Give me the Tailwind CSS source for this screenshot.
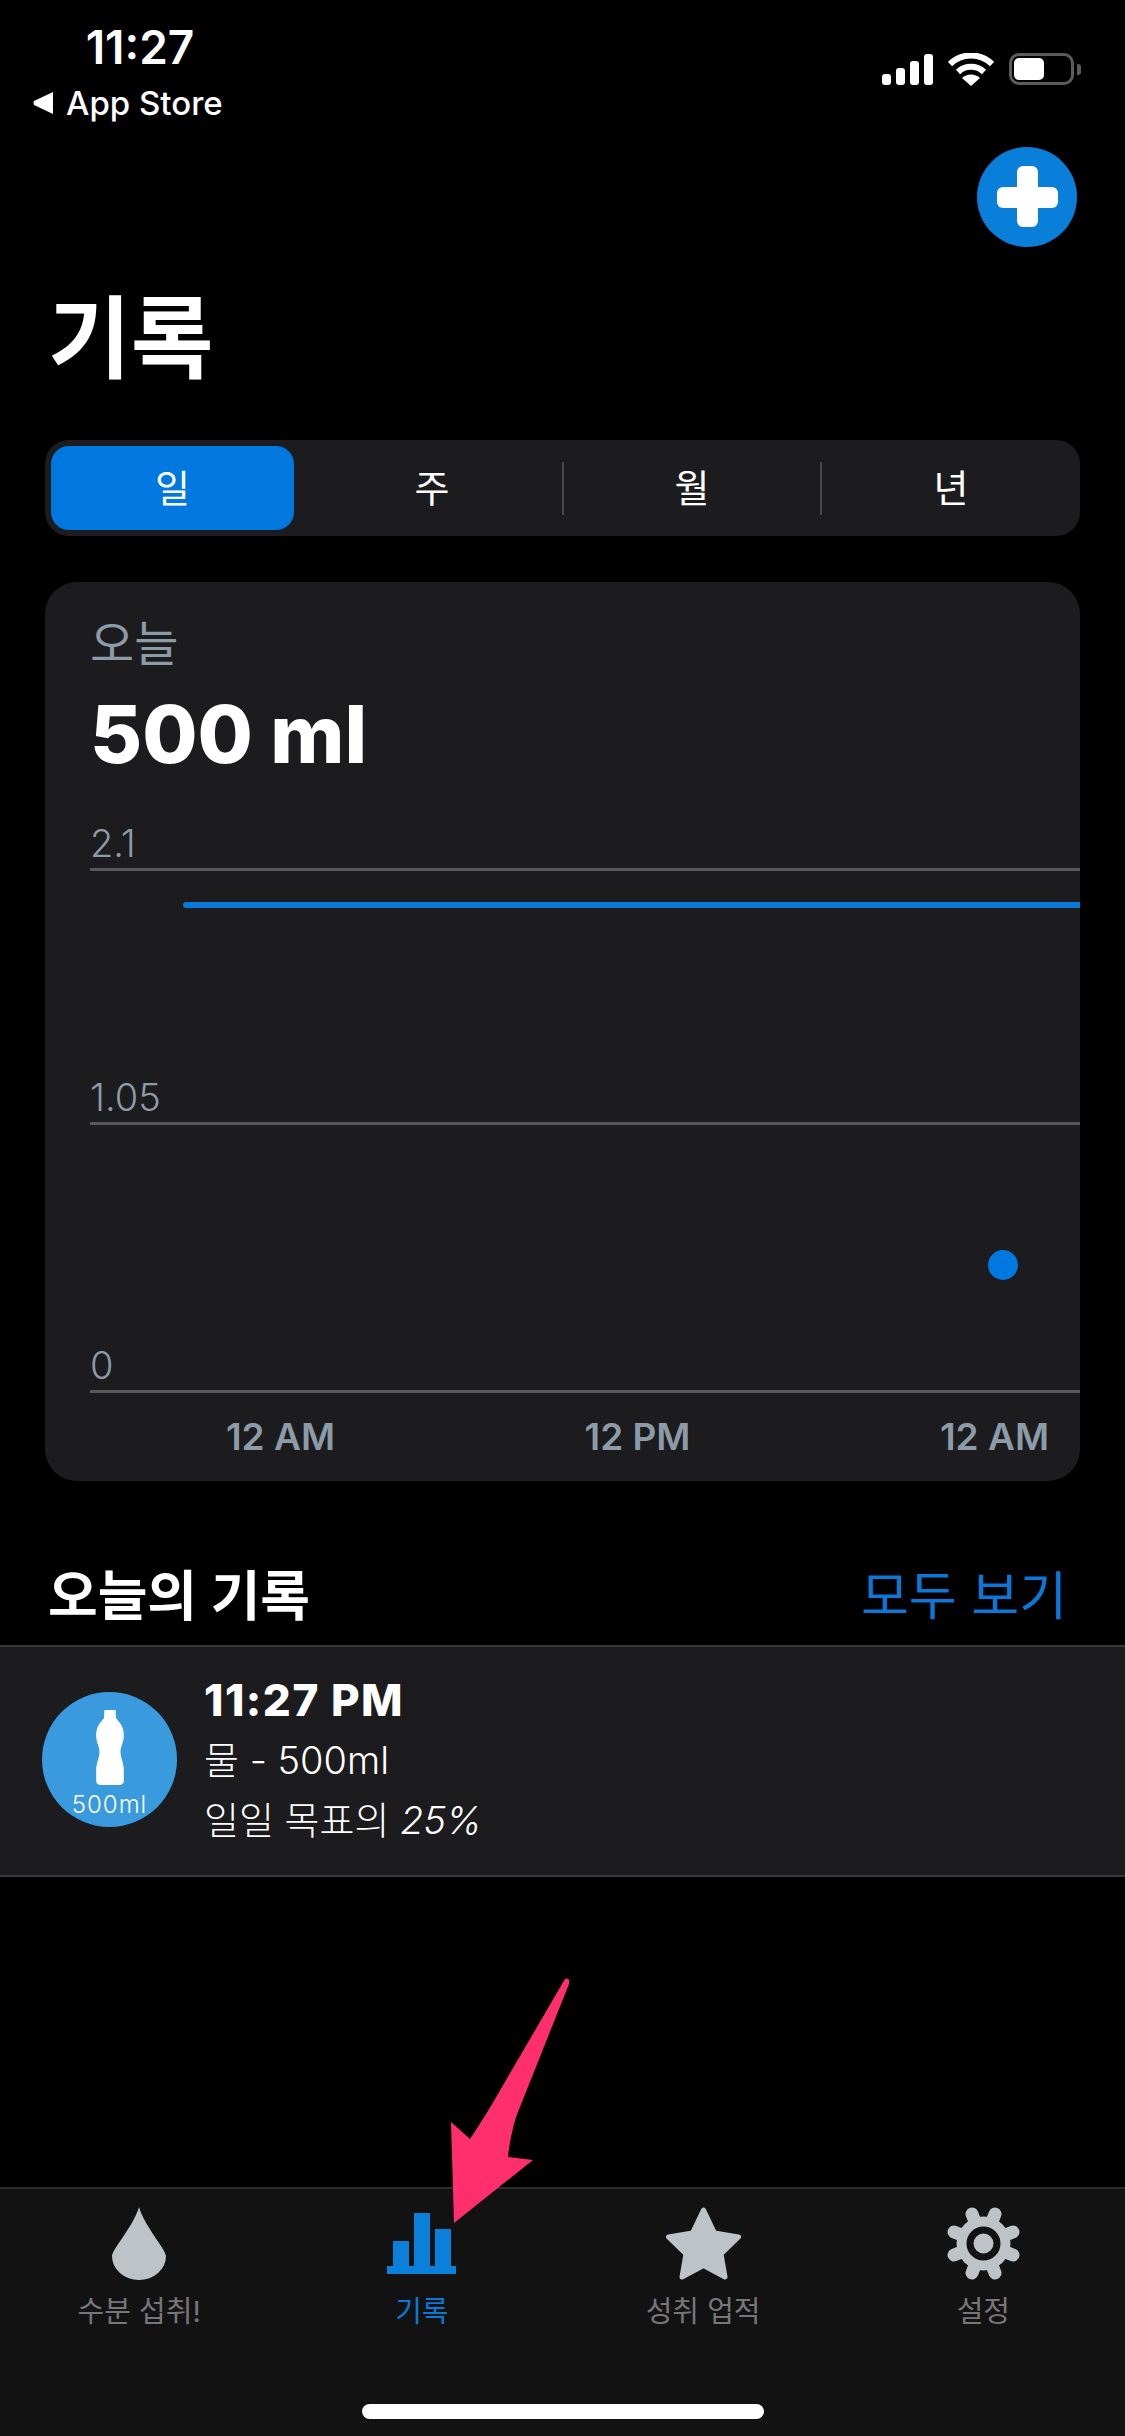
<!DOCTYPE html>
<html lang="ko">
<head>
  <meta charset="UTF-8" />
  <meta name="viewport" content="width=device-width, initial-scale=1.0"/>
  <title>기록</title>
  <script src="https://cdn.jsdelivr.net/npm/@tailwindcss/browser@4"></script>
</head>
<body class="bg-black">
  <div class="relative w-[1125px] h-[2436px] overflow-hidden bg-black text-white flex flex-col font-['Inter','Noto_Sans_CJK_KR',sans-serif]">

    <!-- Status bar -->
    <div class="flex justify-between h-[147px] pl-[33px] pr-[44px]">
      <div>
        <div class="w-[214px] pt-[20px] h-[76px] text-center text-[46px] leading-[54px] font-semibold">11:27</div>
        <div class="flex items-center gap-[13px] h-[50px] mt-[2px] text-[33px] leading-[50px] font-medium">
          <svg class="w-[20px] h-[22px]" viewBox="0 0 20 22"><path d="M20 0v22L1 13q-1-2 0-4z" fill="#fff"/></svg>
          <span>App Store</span>
        </div>
      </div>
      <div class="flex items-start gap-[15px] pt-[53px]">
        <div class="flex items-end gap-[5px] h-[32px]">
          <div class="w-[9px] h-[11px] bg-white rounded-[3px]"></div>
          <div class="w-[9px] h-[17px] bg-white rounded-[3px]"></div>
          <div class="w-[9px] h-[24px] bg-white rounded-[3px]"></div>
          <div class="w-[9px] h-[31px] bg-white rounded-[3px]"></div>
        </div>
        <svg class="w-[46px] h-[33px]" viewBox="0 0 46 33"><path d="M2 11a30 30 0 0 1 42 0M10 19a19 19 0 0 1 26 0" fill="none" stroke="#fff" stroke-width="6"/><path d="M23 33l-9-8a13 13 0 0 1 18 0z" fill="#fff"/></svg>
        <div class="flex items-center">
          <div class="w-[65px] h-[32px] rounded-[10px] border-[3px] border-[#5c5c5e] p-[2px]">
            <div class="w-[30px] h-full bg-white rounded-[5px]"></div>
          </div>
          <div class="w-[4px] h-[11px] ml-[3px] bg-[#5c5c5e] rounded-r-[3px]"></div>
        </div>
      </div>
    </div>

    <!-- Add button -->
    <div class="flex justify-end pr-[48px]">
      <div class="w-[100px] h-[100px] rounded-full bg-[#0a7fd9] relative">
        <div class="absolute left-[20px] top-[40px] w-[61px] h-[21px] bg-white rounded-[6px]"></div>
        <div class="absolute left-[40px] top-[19px] w-[21px] h-[61px] bg-white rounded-[6px]"></div>
      </div>
    </div>

    <h1 class="mt-[37px] pl-[48px] h-[110px] text-[90px] leading-[110px] font-bold">기록</h1>

    <!-- Range picker -->
    <div class="mt-[46px] mx-[45px] h-[96px] rounded-[24px] bg-[#1c1c1e] flex items-center pl-[6px] text-[38px]">
      <div class="w-[243px] h-[84px] rounded-[18px] bg-[#0078e0] flex items-center justify-center">일</div>
      <div class="w-[260px] ml-[8px] h-[53px] flex items-center justify-center">주</div>
      <div class="w-[258px] h-[53px] border-l-2 border-[#48484a] flex items-center justify-center">월</div>
      <div class="flex-1 h-[53px] border-l-2 border-[#48484a] flex items-center justify-center">년</div>
    </div>

    <!-- Chart card -->
    <div class="mt-[46px] mx-[45px] h-[899px] rounded-[32px] bg-[#1c1c1e] pl-[45px] overflow-hidden">
      <div class="pt-[30px] h-[96px] text-[48px] leading-[64px] text-[#8b9ba8]">오늘</div>
      <div class="pt-[2px] h-[110px] text-[80px] leading-[108px] font-extrabold">500 ml</div>
      <div class="relative text-[38px] leading-[44px] font-light text-[#8b9ba8]">
        <div class="h-[83px] flex flex-col justify-end">
          <div>2.1</div>
          <div class="h-[3px] mt-[3px] bg-[#58585a]"></div>
        </div>
        <div class="h-[254px] flex flex-col justify-end">
          <div>1.05</div>
          <div class="h-[3px] mt-[3px] bg-[#58585a]"></div>
        </div>
        <div class="h-[268px] flex flex-col justify-end">
          <div>0</div>
          <div class="h-[3px] mt-[3px] bg-[#58585a]"></div>
        </div>
        <div class="absolute left-[93px] right-0 top-[114px] h-[6px] bg-[#0a78d8] rounded-l-[3px]"></div>
        <div class="absolute left-[898px] top-[462px] w-[30px] h-[30px] rounded-full bg-[#0078e0]"></div>
      </div>
      <div class="flex ml-[12px] mt-[20px] text-[37px] leading-[48px] font-semibold text-[#8b9ba8] text-center">
        <div class="w-[357px] shrink-0">12 AM</div>
        <div class="w-[357px] shrink-0">12 PM</div>
        <div class="w-[357px] shrink-0">12 AM</div>
      </div>
    </div>

    <!-- Today's log -->
    <div class="mt-[72px] h-[92px] pt-[8px] pl-[48px] pr-[58px] flex justify-between items-start">
      <h2 class="text-[54px] leading-[72px] font-semibold">오늘의 기록</h2>
      <a class="text-[52px] leading-[72px] text-[#0a78d8]">모두 보기</a>
    </div>
    <div class="h-[232px] pb-[3px] border-y-2 border-[#38383a] bg-[#1c1c1e] flex items-center pl-[42px]">
      <div class="w-[135px] h-[135px] rounded-full bg-[#3a9ade] flex flex-col items-center pt-[18px]">
        <svg class="w-[28px] h-[75px]" viewBox="0 0 83 225"><path d="M28 0h27q4 0 4 4v17q0 4 3 7c12 12 21 26 21 48c0 22-10 34-10 50c0 18 10 32 10 56v30q0 12-14 13h-55q-14-1-14-13v-30c0-24 10-38 10-56c0-16-10-28-10-50c0-22 9-36 21-48q3-3 3-7V4q0-4 4-4z" fill="#fff"/></svg>
        <div class="mt-[5px] text-[24px] leading-[30px] tracking-[1px] font-light">500ml</div>
      </div>
      <div class="ml-[27px]">
        <div class="text-[44px] leading-[60px] tracking-[1.500px] font-extrabold">11:27 PM</div>
        <div class="text-[38px] leading-[60px] font-light">물 - 500ml</div>
        <div class="text-[38px] leading-[60px] font-light">일일 목표의 <span class="italic">25%</span></div>
      </div>
    </div>

    <!-- Tab bar -->
    <div class="mt-auto h-[249px] bg-[#121212] border-t-2 border-[#2c2c2e]">
      <div class="grid grid-cols-4 pt-[18px] text-[29px] leading-[40px] text-[#77777a] text-center">
        <div class="flex flex-col items-center pr-[3px]">
          <svg class="w-[54px] h-[73px]" viewBox="0 0 54 73"><path d="M27 0c5 18 27 43 27 49a27 24 0 0 1-54 0C0 43 22 18 27 0z" fill="#bdc3c7"/></svg>
          <div class="mt-[12px]">수분 섭취!</div>
        </div>
        <div class="flex flex-col items-center text-[#0a78d8]">
          <svg class="w-[69px] h-[61px] mt-[6px] mb-[6px]" viewBox="0 0 69 61" fill="#0a80da"><path d="M6 28h16v26H6zM27 0h16v54H27zM48 16h16v38H48zM0 53h69v8H0z"/></svg>
          <div class="mt-[12px]">기록</div>
        </div>
        <div class="flex flex-col items-center">
          <svg class="w-[75px] h-[73px]" viewBox="0 0 75 73"><path d="M37.500 3l11 23 24 4-17.500 17 4 23-21.500-11.500-21.500 11.500 4-23-17.500-17 24-4z" fill="#bdc3c7" stroke="#bdc3c7" stroke-width="5" stroke-linejoin="round"/></svg>
          <div class="mt-[12px]">성취 업적</div>
        </div>
        <div class="flex flex-col items-center pr-[2px]">
          <svg class="w-[73px] h-[73px]" viewBox="0 0 73 73">
            <g stroke="#bdc3c7" stroke-width="13" stroke-linecap="round">
              <path d="M25 7l11.500 29.500M48 7L36.500 36.500M66 25L36.500 36.500M66 48L36.500 36.500M48 66L36.500 36.500M25 66l11.500-29.500M7 48l29.500-11.500M7 25l29.500 11.500"/>
            </g>
            <circle cx="36.500" cy="36.500" r="27" fill="#bdc3c7"/>
            <circle cx="36.500" cy="36.500" r="13.500" fill="none" stroke="#121212" stroke-width="7"/>
          </svg>
          <div class="mt-[12px]">설정</div>
        </div>
      </div>
      <div class="w-[402px] h-[15px] mx-auto mt-[72px] rounded-full bg-white"></div>
    </div>

    <!-- Annotation arrow -->
    <svg class="absolute left-0 top-0 w-[1125px] h-[2436px] pointer-events-none" viewBox="0 0 1125 2436">
      <path d="M565 1979Q570 1977 569 1984L516 2117Q510 2137 508 2157L533 2160L454 2223L451 2122L470 2139Q488 2112 502 2087Z" fill="#ff2f6e"/>
    </svg>
  </div>
</body>
</html>
